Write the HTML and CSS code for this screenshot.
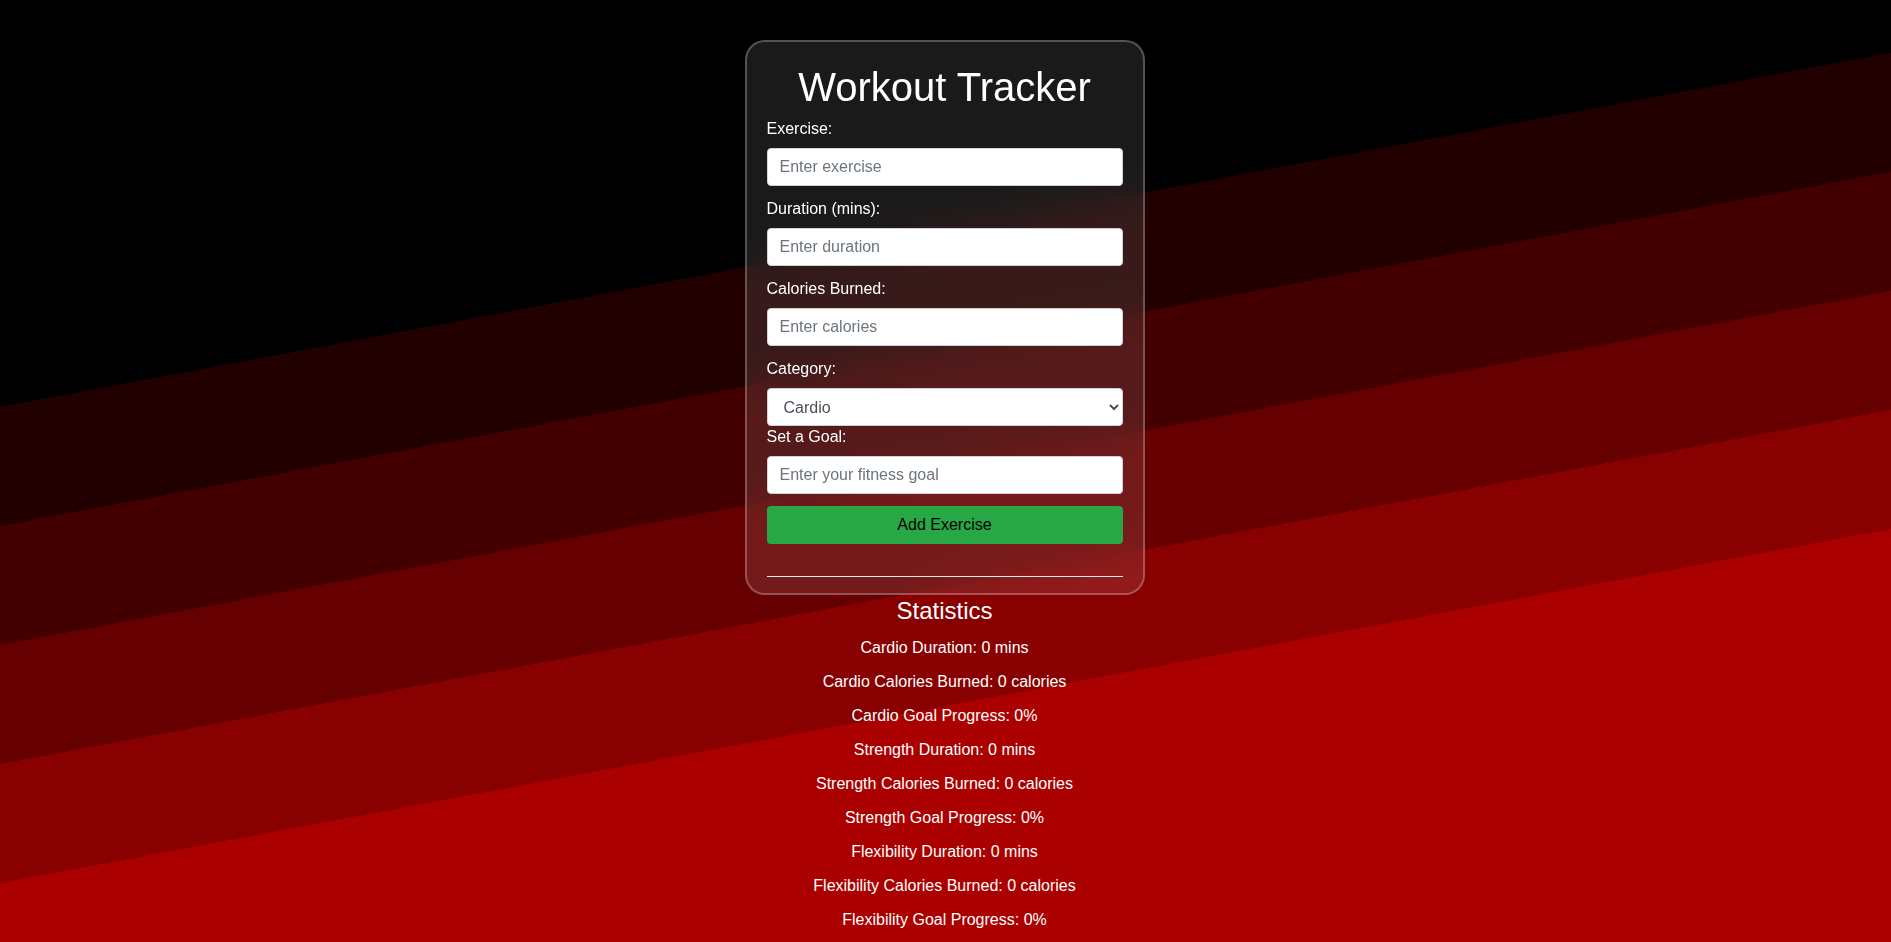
FILE: index.html
```html
<!DOCTYPE html>
<html lang="en">
<head>
<meta charset="utf-8">
<title>Workout Tracker</title>
<link rel="stylesheet" href="styles.css">
</head>
<body>
<main class="page">
  <div class="card">
    <h1 class="title">Workout Tracker</h1>
    <form class="form">
      <div class="group">
        <label class="label" for="exercise">Exercise:</label>
        <input class="field" id="exercise" type="text" placeholder="Enter exercise">
      </div>
      <div class="group">
        <label class="label" for="duration">Duration (mins):</label>
        <input class="field" id="duration" type="number" placeholder="Enter duration">
      </div>
      <div class="group">
        <label class="label" for="calories">Calories Burned:</label>
        <input class="field" id="calories" type="number" placeholder="Enter calories">
      </div>
      <div class="group group-tight">
        <label class="label" for="category">Category:</label>
        <select class="field select" id="category">
          <option>Cardio</option>
          <option>Strength</option>
          <option>Flexibility</option>
        </select>
      </div>
      <div class="group group-goal">
        <label class="label" for="goal">Set a Goal:</label>
        <input class="field" id="goal" type="text" placeholder="Enter your fitness goal">
      </div>
      <button class="btn" type="button">Add Exercise</button>
    </form>
    <hr class="divider">
  </div>
  <section class="stats">
    <h3 class="stats-title">Statistics</h3>
    <p class="stat">Cardio Duration: 0 mins</p>
    <p class="stat">Cardio Calories Burned: 0 calories</p>
    <p class="stat">Cardio Goal Progress: 0%</p>
    <p class="stat">Strength Duration: 0 mins</p>
    <p class="stat">Strength Calories Burned: 0 calories</p>
    <p class="stat">Strength Goal Progress: 0%</p>
    <p class="stat">Flexibility Duration: 0 mins</p>
    <p class="stat">Flexibility Calories Burned: 0 calories</p>
    <p class="stat">Flexibility Goal Progress: 0%</p>
  </section>
</main>
</body>
</html>
```

FILE: styles.css
```css
html, body {
  margin: 0;
  padding: 0;
}

body {
  font-family: "Liberation Sans", Arial, sans-serif;
  font-size: 16px;
  color: #fff;
  background-color: #000;
  background-image: linear-gradient(169.39deg,
    #000000 0px, #000000 400px,
    #220000 400px, #220000 517px,
    #440000 517px, #440000 634px,
    #660000 634px, #660000 751px,
    #880000 751px, #880000 868px,
    #aa0000 868px);
  background-attachment: fixed;
  background-repeat: no-repeat;
}

.page {
  padding-top: 40px;
  padding-right: 2px;
  display: flex;
  flex-direction: column;
  align-items: center;
}

.card {
  box-sizing: border-box;
  width: 400px;
  padding: 20px 20px 16px;
  border: 2px solid rgba(255, 255, 255, 0.25);
  border-radius: 20px;
  background: rgba(255, 255, 255, 0.1);
  -webkit-backdrop-filter: blur(20px);
  backdrop-filter: blur(20px);
}

.title {
  margin: 2px 0 10px;
  font-size: 40px;
  line-height: 46px;
  font-weight: normal;
  text-align: center;
  color: #fff;
}

.form {
  display: flex;
  flex-direction: column;
}

.group {
  display: flex;
  flex-direction: column;
  margin-bottom: 14px;
}

.group-tight {
  margin-bottom: 2px;
}

.group-goal {
  margin-bottom: 12px;
}

.label {
  display: block;
  margin-bottom: 10px;
  line-height: 18px;
  color: #fff;
}

.field {
  box-sizing: border-box;
  display: block;
  width: 100%;
  height: 38px;
  margin: 0;
  padding: 6px 12px;
  font-family: "Liberation Sans", Arial, sans-serif;
  font-size: 16px;
  line-height: 24px;
  color: #495057;
  background-color: #fff;
  border: 1px solid #ced4da;
  border-radius: 4px;
}

.field::placeholder {
  color: #6c757d;
  opacity: 1;
}

input[type=number].field {
  -moz-appearance: textfield;
}
input[type=number].field::-webkit-outer-spin-button,
input[type=number].field::-webkit-inner-spin-button {
  -webkit-appearance: none;
  margin: 0;
}

.select {
  padding: 6px 8px 6px 12px;
}

.btn {
  display: block;
  width: 100%;
  height: 38px;
  margin: 0;
  padding: 6px 12px;
  font-family: "Liberation Sans", Arial, sans-serif;
  font-size: 16px;
  line-height: 24px;
  color: #000;
  background-color: #28a745;
  border: none;
  border-radius: 4px;
}

.divider {
  margin: 32px 0 0;
  height: 0;
  border: none;
  border-top: 1px solid #e8e8e8;
}

.stats {
  margin-top: 2px;
  text-align: center;
}

.stats-title {
  margin: 0 0 14px;
  font-size: 24px;
  line-height: 28px;
  font-weight: normal;
  color: #fff;
}

.stat {
  margin: 0 0 16px;
  line-height: 18px;
  color: #fff;
}

.stat:last-child {
  margin-bottom: 0;
}
```
